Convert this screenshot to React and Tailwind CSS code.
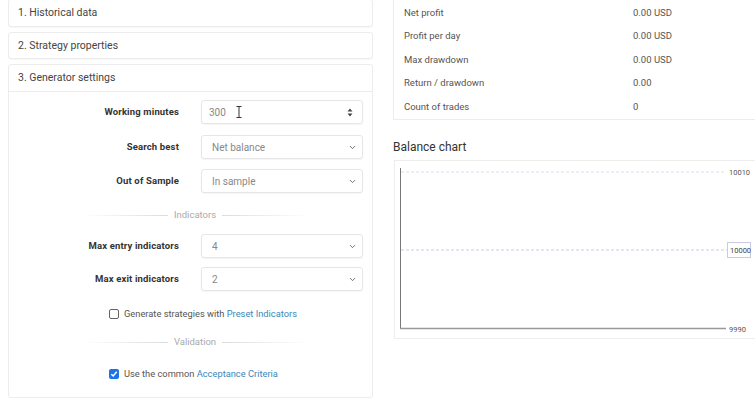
import { ChevronDown } from "lucide-react";

const font = { fontFamily: "Roboto, 'Liberation Sans', sans-serif" };

function Header({ children, className }) {
  return (
    <div className={"flex items-center rounded-[3px] border border-[#ececec] bg-white px-[9px] text-[10.5px] text-[#444] shadow-[0_1px_1px_rgba(0,0,0,0.03)] " + (className || "")}>
      {children}
    </div>
  );
}

function Row({ label, children, className }) {
  return (
    <div className={"flex items-center " + (className || "")}>
      <div className="w-[170px] text-right text-[9.5px] font-bold tracking-[0.15px] text-[#333]">{label}</div>
      <div className="ml-[22px] w-[162px]">{children}</div>
    </div>
  );
}

function Select({ value }) {
  return (
    <div className="flex h-[24px] items-center justify-between rounded-[3px] border border-[#e6e6e6] bg-white pl-[10px] pr-[5px] text-[10px] text-[#888] shadow-[0_1px_1px_rgba(0,0,0,0.04)]">
      <span>{value}</span>
      <ChevronDown size={9} strokeWidth={2.5} className="text-[#666]" />
    </div>
  );
}

function Divider({ label, className }) {
  return (
    <div className={"ml-[72px] flex w-[228px] items-center gap-[6px] " + (className || "")}>
      <div className="h-px flex-1 bg-gradient-to-r from-transparent to-[#dcdcdc]" />
      <span className="text-[9.5px] leading-[12px] text-[#aaa]">{label}</span>
      <div className="h-px flex-1 bg-gradient-to-l from-transparent to-[#dcdcdc]" />
    </div>
  );
}

function Check({ checked, text, link, className }) {
  return (
    <div className={"ml-[100px] flex h-[12px] items-center text-[9.3px] text-[#555] " + (className || "")}>
      {checked ? (
        <span className="mr-[5px] flex h-[10px] w-[10px] items-center justify-center rounded-[2px] bg-[#1a73e8]">
          <svg width="8" height="8" viewBox="0 0 8 8">
            <path d="M1.3 4.2 L3.2 6 L6.7 1.8" fill="none" stroke="white" strokeWidth="1.5" />
          </svg>
        </span>
      ) : (
        <span className="mr-[5px] h-[10px] w-[10px] rounded-[2px] border border-[#666] bg-white" />
      )}
      <span>{text}&nbsp;</span>
      <span className="text-[#3b87b8]">{link}</span>
    </div>
  );
}

const stats = [
  ["Net profit", "0.00 USD"],
  ["Profit per day", "0.00 USD"],
  ["Max drawdown", "0.00 USD"],
  ["Return / drawdown", "0.00"],
  ["Count of trades", "0"],
];

export default function App() {
  return (
    <div className="flex h-[398px] w-[755px] overflow-hidden bg-white" style={font}>
      <div className="ml-[8px] flex w-[365px] shrink-0 flex-col gap-[5px] -mt-px">
        <Header className="h-[28px]">1. Historical data</Header>
        <Header className="h-[27px]">2. Strategy properties</Header>
        <div className="flex flex-1 flex-col rounded-[3px] border border-[#ececec]">
          <div className="flex h-[27px] items-center border-b border-[#ececec] px-[9px] text-[10.5px] text-[#444]">3. Generator settings</div>
          <div className="flex-1 pt-[8px]">
            <Row label="Working minutes">
              <div className="relative flex h-[24px] items-center justify-between rounded-[3px] border border-[#e6e6e6] bg-white pl-[7px] pr-[9px] text-[10px] text-[#888] shadow-[0_1px_1px_rgba(0,0,0,0.04)]">
                <span>300</span>
                <svg className="absolute left-[34px] top-[5px]" width="6" height="12" viewBox="0 0 6 12">
                  <path d="M0.5 0.5 H5.5 M3 0.5 V11.5 M0.5 11.5 H5.5" fill="none" stroke="#333" strokeWidth="1" />
                </svg>
                <svg width="6" height="9" viewBox="0 0 6 9">
                  <path d="M3 0.5 L5.5 3.5 H0.5 Z M3 8.5 L5.5 5.5 H0.5 Z" fill="#444" />
                </svg>
              </div>
            </Row>
            <Row label="Search best" className="mt-[11px]">
              <Select value="Net balance" />
            </Row>
            <Row label="Out of Sample" className="mt-[10px]">
              <Select value="In sample" />
            </Row>
            <Divider label="Indicators" className="mt-[16px]" />
            <Row label="Max entry indicators" className="mt-[13px]">
              <Select value="4" />
            </Row>
            <Row label="Max exit indicators" className="mt-[9px]">
              <Select value="2" />
            </Row>
            <Check text="Generate strategies with" link="Preset Indicators" className="mt-[17px]" />
            <Divider label="Validation" className="mt-[16px]" />
            <Check checked text="Use the common" link="Acceptance Criteria" className="mt-[20px]" />
          </div>
        </div>
      </div>

      <div className="ml-[20px] w-[380px] shrink-0">
        <div className="w-[380px] border border-t-0 border-[#ececec] pt-px">
          {stats.map(([k, v]) => (
            <div key={k} className="flex h-[23.5px] items-center pl-[10px] text-[9.5px] text-[#555]">
              <span className="w-[229px]">{k}</span>
              <span>{v}</span>
            </div>
          ))}
        </div>
        <div className="mt-[18px] text-[12px] text-[#333]">Balance chart</div>
        <div className="mt-[4px] ml-px h-[179px] w-[380px] border border-[#ededed]">
          <svg width="378" height="177" viewBox="0 0 378 177">
            <line x1="6" y1="11" x2="331" y2="11" stroke="#dde" strokeDasharray="3 2" strokeWidth="1" />
            <line x1="6" y1="89" x2="332" y2="89" stroke="#c9cbe6" strokeDasharray="3 2" strokeWidth="1" />
            <line x1="5.5" y1="7" x2="5.5" y2="168" stroke="#777" strokeWidth="1" />
            <line x1="5" y1="167.5" x2="331" y2="167.5" stroke="#999" strokeWidth="1.5" />
            <text x="334" y="14" fontSize="7.5" fill="#555" style={font}>10010</text>
            <rect x="332.5" y="81.5" width="23" height="15" fill="white" stroke="#c9cbe6" />
            <text x="335" y="92" fontSize="7.5" fill="#444" style={font}>10000</text>
            <text x="334" y="170.5" fontSize="7.5" fill="#555" style={font}>9990</text>
          </svg>
        </div>
      </div>
    </div>
  );
}
